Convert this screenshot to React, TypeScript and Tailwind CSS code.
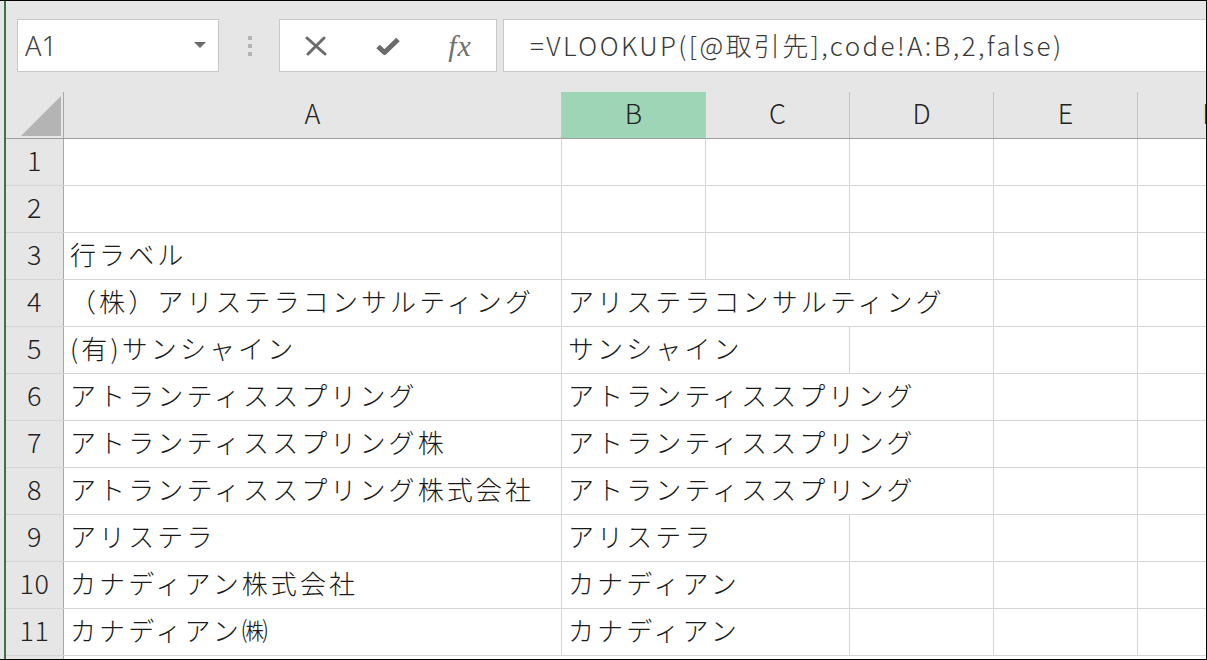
import React from 'react';

type Col = { key: string; w: string };

const COLS: Col[] = [
  { key: 'A', w: 'w-[498px]' },
  { key: 'B', w: 'w-[144px]' },
  { key: 'C', w: 'w-[144px]' },
  { key: 'D', w: 'w-[144px]' },
  { key: 'E', w: 'w-[144px]' },
  { key: 'F', w: 'w-[144px]' },
];

// text in A and B, plus which right borders are covered by overflowing text
const ROWS: { a?: string; b?: string; hide: string[] }[] = [
  { hide: [] },
  { hide: [] },
  { a: '行ラベル', hide: [] },
  { a: '（株）アリステラコンサルティング', b: 'アリステラコンサルティング', hide: ['B', 'C'] },
  { a: '(有)サンシャイン', b: 'サンシャイン', hide: ['B'] },
  { a: 'アトランティススプリング', b: 'アトランティススプリング', hide: ['B', 'C'] },
  { a: 'アトランティススプリング株', b: 'アトランティススプリング', hide: ['B', 'C'] },
  { a: 'アトランティススプリング株式会社', b: 'アトランティススプリング', hide: ['B', 'C'] },
  { a: 'アリステラ', b: 'アリステラ', hide: ['B'] },
  { a: 'カナディアン株式会社', b: 'カナディアン', hide: ['B'] },
  { a: 'カナディアン㈱', b: 'カナディアン', hide: ['B'] },
];

const jp = "font-['Noto_Sans_CJK_JP',sans-serif]";

function FormulaBar() {
  return (
    <div className="h-[91px] shrink-0 flex items-start pt-[18px] pl-[11px]">
      <div className="w-[202px] h-[53px] shrink-0 border border-[#c8c8c8] bg-white flex items-center justify-between pl-[7px] pr-[12px]">
        <span className="font-['Noto_Sans',sans-serif] font-light text-[27px] text-[#444] leading-none">A1</span>
        <svg width="12" height="7" viewBox="0 0 12 7">
          <polygon points="0,0 12,0 6,6" fill="#6b6b6b" />
        </svg>
      </div>
      <div className="w-[60px] h-[53px] shrink-0 flex flex-col items-center justify-center gap-[4px] pl-[1px]">
        <div className="w-[4px] h-[4px] bg-[#b3b3b3]" />
        <div className="w-[4px] h-[4px] bg-[#b3b3b3]" />
        <div className="w-[4px] h-[4px] bg-[#b3b3b3]" />
      </div>
      <div className="w-[218px] h-[53px] shrink-0 border border-[#c8c8c8] bg-white grid grid-cols-3 items-center justify-items-center">
        <svg width="22" height="20" viewBox="0 0 22 20">
          <path d="M2 2 L20 18 M19 2 L3 18" stroke="#6b6b6b" strokeWidth="3" strokeLinecap="round" fill="none" />
        </svg>
        <svg width="26" height="20" viewBox="0 0 26 20">
          <path d="M3 10.5 L9.5 16.5 L23 3.5" stroke="#6b6b6b" strokeWidth="5" strokeLinejoin="round" fill="none" />
        </svg>
        <span className="font-['Liberation_Serif',serif] italic text-[30px] tracking-[1px] text-[#707070] leading-none">fx</span>
      </div>
      <div className={`flex-1 ml-[6px] h-[53px] border border-r-0 border-[#c8c8c8] bg-white flex items-center pl-[26px] pb-[2px] ${jp} font-light text-[26px] tracking-[2.4px] text-[#3a3a3a] whitespace-nowrap`}>
        =VLOOKUP([@取引先],code!A:B,2,false)
      </div>
    </div>
  );
}

function HeaderRow() {
  return (
    <div className="h-[47px] shrink-0 flex border-b border-[#9e9e9e]">
      <div className="w-[58px] shrink-0 border-r border-[#a8a8a8] flex items-end justify-end pr-[2px] pb-[2px]">
        <svg width="40" height="40" viewBox="0 0 40 40">
          <polygon points="40,0 40,40 0,40" fill="#b4b4b4" />
        </svg>
      </div>
      {COLS.map(c => (
        <div
          key={c.key}
          className={`${c.w} shrink-0 border-r border-[#c4c4c4] flex items-center justify-center pb-[4px] ${jp} font-light text-[27px] text-[#222] ${
            c.key === 'B' ? 'bg-[#9fd5b7]' : ''
          }`}
        >
          {c.key}
        </div>
      ))}
    </div>
  );
}

export default function App() {
  return (
    <div className="w-[1207px] h-[660px] bg-[#e6e6e6] border-t border-r border-b border-black flex overflow-hidden">
      <div className="w-[4px] shrink-0" />
      <div className="w-[2px] shrink-0 bg-[#3f7350]" />
      <div className="flex-1 flex flex-col min-w-0 overflow-hidden">
        <FormulaBar />
        <HeaderRow />
        <div className="flex-1 flex flex-col bg-white">
          {ROWS.map((r, i) => (
            <div key={i} className="h-[47px] shrink-0 flex border-b border-[#d4d4d4]">
              <div className={`w-[58px] shrink-0 border-r border-[#a8a8a8] bg-[#e6e6e6] flex items-center justify-center pb-[4px] ${jp} font-light text-[27px] tracking-[0.5px] text-[#222]`}>
                {i + 1}
              </div>
              {COLS.map(c => {
                const text = c.key === 'A' ? r.a : c.key === 'B' ? r.b : undefined;
                const hidden = r.hide.includes(c.key);
                return (
                  <div
                    key={c.key}
                    className={`${c.w} shrink-0 flex items-center pl-[6px] pb-[5px] whitespace-nowrap ${jp} font-light text-[26px] tracking-[3.1px] text-[#1a1a1a] ${
                      hidden ? '' : 'border-r border-[#d4d4d4]'
                    }`}
                  >
                    {text}
                  </div>
                );
              })}
            </div>
          ))}
          <div className="flex-1 flex">
            <div className="w-[58px] shrink-0 border-r border-[#a8a8a8] bg-[#e6e6e6]" />
          </div>
        </div>
      </div>
    </div>
  );
}
